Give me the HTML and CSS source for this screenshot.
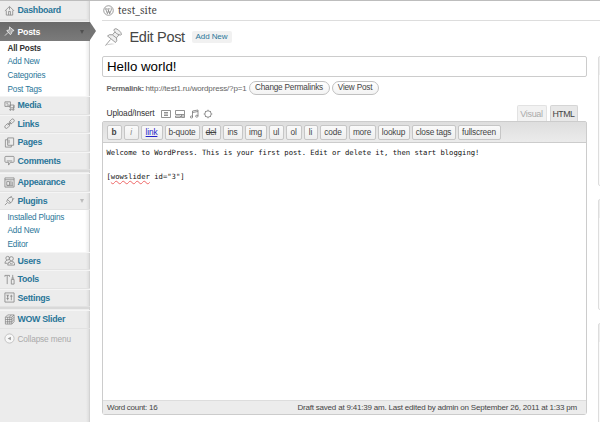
FILE: index.html
```html
<!DOCTYPE html>
<html lang="en">
<head>
<meta charset="utf-8">
<title>Edit Post</title>
<link rel="stylesheet" href="styles.css">
</head>
<body>
<div class="app">
<nav class="menu">
  <a class="item dash"><svg viewBox="0 0 12 12"><path d="M1 6.5 6 1.5l5 5M2.5 6v5h7V6M5 11V7h2v4M6 2v3"/></svg>Dashboard</a>
  <div class="sep first"></div>
  <a class="item current"><svg viewBox="0 0 12 12"><path class="pin" d="m6 1 5 4-2 .5-1 3-1 1L3 5l3-1zM4.5 7 1 10.500"/></svg>Posts<i class="arrow"></i></a>
  <div class="sub posts"><b>All Posts</b><a>Add New</a><a>Categories</a><a>Post Tags</a></div>
  <a class="item"><svg viewBox="0 0 12 12"><path d="M1 2h6v5H1zM2.500 3.500h2M3 5.500h3M6.500 5.500H11v3H6.500zM7.500 9.500v1.500M10.500 6v4.500"/><circle cx="7" cy="10.500" r=".8"/><circle cx="10" cy="10.500" r=".8"/></svg>Media</a>
  <a class="item"><svg viewBox="0 0 12 12"><rect x="5.500" y="2" width="6" height="3.400" rx="1.700" transform="rotate(-45 8.500 3.700)"/><rect x=".5" y="7" width="6" height="3.400" rx="1.700" transform="rotate(-45 3.500 8.700)"/><path d="m4 8 4-4"/></svg>Links</a>
  <a class="item"><svg viewBox="0 0 12 12"><path d="M4 1h6.500v8H4zM4 3H1.500v8H8V9M5.500 3v4"/></svg>Pages</a>
  <a class="item"><svg viewBox="0 0 12 12"><path d="M2 1.500h8q1 0 1 1V7q0 1-1 1H7l-2 3V8H2Q1 8 1 7V2.500q0-1 1-1zM3 6.500h6"/></svg>Comments</a>
  <div class="sep"></div>
  <a class="item"><svg viewBox="0 0 12 12"><path d="M1 1h10v10H1zM1 3h10M3 5h3v4H3zM7.500 4v5M9 5v4M3 9.500h7"/></svg>Appearance</a>
  <a class="item plug"><svg viewBox="0 0 12 12"><path d="M4 4.500C6 2 8 2 9 3s1 3-1.500 5.500L5 9 3 7zM3.500 8.500 1 11M6.500 3 8.500 1M9 5.500l2-2M4 5l3.500 3.500"/></svg>Plugins<i class="arrow light"></i></a>
  <div class="sub plugins"><a>Installed Plugins</a><a>Add New</a><a>Editor</a></div>
  <a class="item"><svg viewBox="0 0 12 12"><circle cx="4" cy="3.500" r="2"/><circle cx="8" cy="4" r="2.200"/><path d="M3.500 5.500Q1 6.500 1 9h3M4 11q0-4 4-4t3.500 4zM6 8l2 2 2-2"/></svg>Users</a>
  <a class="item"><svg viewBox="0 0 12 12"><path d="M1 3V1.500h5V3M3.500 2v9M9.500 1v4M8 6h3v5H8zM8 4.500h3"/></svg>Tools</a>
  <a class="item set"><svg viewBox="0 0 12 12"><path d="M1 1h10v10H1zM4 3v6M8 3v6M2.700 7h2.600M6.700 4.500h2.600M4 5 3 3M4 5l1-2"/></svg>Settings</a>
  <div class="sep"></div>
  <a class="item wow"><svg viewBox="0 0 12 12"><path d="M1.500 3.500h7V11h-7zM4 3.500V11M6.300 3.500V11M1.500 6h7M1.500 8.500h7M1.500 3.500 4 1h7L8.500 3.500M11 1v7.500L8.500 11M6 3l2-2M8.500 6 11 3.500M8.500 8.500 11 6"/></svg>WOW Slider</a>
  <a class="item collapse"><svg viewBox="0 0 12 12"><circle cx="6" cy="6" r="5"/><path class="solid" d="M7.500 4v4L4 6z"/></svg>Collapse menu</a>
</nav>
<main class="main">
  <header class="site"><svg viewBox="0 0 12 12"><circle cx="6" cy="6" r="5.200"/><path d="M2 4.200h2.500M5 4.200h2.500M3 4.500l1.800 5L6 5.800 7.300 9.500 9 5.500Q9.500 4 8.500 3M5.300 4.200l2 5.300"/></svg>test_site</header>
  <div class="heading">
    <svg viewBox="0 0 20 20"><path class="shade" d="M2 18.500q5-3 10-1.500-5 .5-10 1.500z"/><path class="body" d="M11 2.500q1.500-2 4.500.5t3 4.500q-1 1-2.500.3l-2.500 3q1 3.500-1 4.700L4.500 9q1.500-2 5-1.200l2.500-3q-1.500-1-1-2.300z"/><path d="m7.500 12.500-5 6M9.500 8l4 3M12 5q1.500 2 4 2.800"/></svg>
    <h1>Edit Post</h1><a class="add">Add New</a>
  </div>
  <div class="title">Hello world!</div>
  <div class="perma"><b>Permalink:</b><span class="url">http://test1.ru/wordpress/?p=1</span><a class="pill change">Change Permalinks</a><a class="pill view">View Post</a></div>
  <div class="media">
    <span class="upl">Upload/Insert</span>
    <svg viewBox="0 0 10 10"><path d="M.5 1.500h9v7h-9zM3 3.500h4M3 5h4M3 6.500h4"/></svg>
    <svg viewBox="0 0 10 10"><path d="M.5 1.500h9v4h-9zM.5 7h5v1.500h-5zM6.500 5.500v3h3v-3M7 7h2"/></svg>
    <svg viewBox="0 0 10 10"><path d="M3.500 8V2L9 1v6M3.500 3.500 9 2.500"/><ellipse cx="2.500" cy="8" rx="1.200" ry="1"/><ellipse cx="7.800" cy="7.200" rx="1.200" ry="1"/></svg>
    <svg viewBox="0 0 10 10"><circle cx="5" cy="5" r="3.200"/><path d="M5 .7v1.100M5 8.200v1.100M.7 5h1.100M8.200 5h1.100M2 2l.8.8M7.200 7.200l.8.800M8 2l-.8.800M2.800 7.200 2 8"/></svg>
    <div class="tabs"><span class="tab visual">Visual</span><span class="tab html">HTML</span></div>
  </div>
  <section class="editor">
    <div class="bar"><span class="w15"><b>b</b></span><span class="w15 it"><em>i</em></span><span class="w22 lk"><u>link</u></span><span class="w35">b-quote</span><span class="w19"><del>del</del></span><span class="w20">ins</span><span class="w22">img</span><span class="w15">ul</span><span class="w16">ol</span><span class="w14">li</span><span class="w27">code</span><span class="w27">more</span><span class="w32">lookup</span><span class="w44">close tags</span><span class="w43">fullscreen</span></div>
    <div class="content">Welcome to WordPress. This is your first post. Edit or delete it, then start blogging!<br><br>[<span class="typo">wowslider</span> id="3"]</div>
    <footer><span class="count">Word count: 16</span><span class="saved">Draft saved at 9:41:39 am. Last edited by admin on September 26, 2011 at 1:33 pm</span></footer>
  </section>
</main>
<aside class="side"><div class="box one"></div><div class="box two"></div><div class="box three"></div></aside>
</div>
</body>
</html>
```
FILE: styles.css
```css
* { box-sizing: border-box; }
body { margin: 0; width: 600px; height: 422px; overflow: hidden; background: #fff; color: #444; font-family: "Liberation Sans", Arial, sans-serif; font-size: 8px; }
svg { fill: none; stroke: #888; stroke-width: .9; flex: none; }
.app { display: flex; height: 422px; border-top: 1px solid #bdbdbd; }
.menu { width: 90px; height: 421px; background: linear-gradient(90deg, transparent 86px, #dedede 89px, #c8c8c8 90px), #ececec; flex: none; }
.item { display: flex; align-items: center; height: 18.500px; padding-left: 4px; gap: 3px; font-size: 8.800px; font-weight: bold; letter-spacing: -.28px; color: #2a7699; border-bottom: 1px solid #e2e2e2; border-top: 1px solid #f5f5f5; white-space: nowrap; }
.item svg { width: 11px; height: 11px; margin-right: -.5px; }
.dash { height: 18px; border: 0; }
.sep { height: 3px; background: #d9d9d9; border-bottom: 1px solid #eee; width: 89px; }
.first { background: #e3e3e3; }
.current { position: relative; height: 19px; background: linear-gradient(#696969, #7b7b7b); color: #fff; border: 0; }
.current::after { content: ""; position: absolute; left: 90px; top: 0; border-left: 6px solid #747474; border-top: 9.500px solid transparent; border-bottom: 9.500px solid transparent; }
.current svg { stroke: #eee; }
.pin { fill: #aaa; }
.arrow { margin-left: auto; margin-right: 6px; border-top: 4px solid #505050; border-left: 2.500px solid transparent; border-right: 2.500px solid transparent; }
.light { border-top-color: #bbb; }
.sub { width: 89px; background: linear-gradient(90deg, #fff 85px, #ededed); padding: .5px 0 0 7.500px; font-size: 8.200px; letter-spacing: -.17px; color: #2a7699; display: grid; grid-auto-rows: 13.600px; align-items: center; white-space: nowrap; }
.sub b { color: #333; }
.posts { height: 55px; }
.plugins { height: 41.500px; }
.collapse { border: 0; height: 20px; font-weight: normal; color: #aaa; font-size: 8.300px; letter-spacing: -.15px; }
.collapse svg { stroke: #bbb; fill: #f8f8f8; }
.collapse .solid { fill: #999; stroke: none; }
.wow svg { stroke-width: .7; stroke: #777; }
.main { width: 497px; padding-left: 12px; flex: none; }
.site { display: flex; align-items: center; width: 498px; height: 20px; border-bottom: 1px solid #ddd; font-family: "Noto Serif", "Liberation Serif", serif; font-size: 10px; color: #444; gap: 4px; padding: 0 0 1px 1px; letter-spacing: .1px; }
.site svg { width: 11px; height: 11px; }
.heading { display: flex; align-items: center; height: 35px; padding: 1px 0 5px 1px; }
.heading svg { width: 20px; height: 20px; stroke: #888; stroke-width: .8; margin-top: 1px; }
.body { fill: #eee; }
.heading .shade { fill: #ccc; stroke: none; }
h1 { margin: 0 6px 0 6.500px; font-weight: normal; font-size: 14.500px; letter-spacing: -.3px; width: 56px; color: #464646; white-space: nowrap; }
.add { width: 40px; height: 12px; background: #f1f1f1; border-radius: 2px; color: #2a7699; line-height: 12px; text-align: center; letter-spacing: -.1px; }
.title { height: 21px; border: 1px solid #ccc; border-radius: 2px; font-size: 13.300px; line-height: 19px; padding-left: 4px; color: #000; }
.perma { height: 22px; display: flex; align-items: center; padding-left: 4.500px; color: #666; white-space: nowrap; font-size: 7.800px; letter-spacing: -.24px; }
.perma b { width: 39px; }
.url { width: 103px; font-size: 8px; letter-spacing: -.17px; }
.pill { height: 14px; border: 1px solid #c0c0c0; border-radius: 7px; text-align: center; line-height: 12px; font-size: 8.200px; letter-spacing: -.2px; color: #444; background: linear-gradient(#fff, #f3f3f3); }
.change { width: 81px; }
.view { width: 47px; margin-left: 2px; }
.media { height: 22px; display: flex; padding: 6px 9.500px 0 4.500px; }
.upl { width: 51px; line-height: 17px; font-size: 8.400px; letter-spacing: -.15px; color: #333; white-space: nowrap; }
.media svg { width: 10px; height: 10px; margin: 4px 1px 0 3px; stroke: #777; stroke-width: .8; }
.tabs { margin-left: auto; display: flex; gap: 3px; align-items: flex-end; }
.tab { height: 16px; border: 1px solid #d5d5d5; border-bottom: 0; border-radius: 2px 2px 0 0; font-size: 9px; line-height: 17px; text-align: center; background: #f2f2f2; letter-spacing: -.3px; }
.visual { width: 30px; color: #aaa; border-color: #e2e2e2; }
.html { width: 28px; background: #e8e8e8; color: #444; font-size: 8.800px; letter-spacing: -.5px; }
.editor { height: 294px; border: 1px solid #ccc; border-radius: 2px 2px 3px 3px; display: flex; flex-direction: column; }
.bar { height: 21px; background: linear-gradient(#dedede, #ebebeb); border-bottom: 1px solid #ccc; display: flex; gap: 2px; padding: 3px 0 0 3.500px; }
.bar span { height: 15px; border: 1px solid #c6c6c6; border-radius: 2px; background: linear-gradient(#fafafa, #eee); font-size: 8.300px; letter-spacing: -.17px; line-height: 13px; text-align: center; white-space: nowrap; color: #444; }
.bar .it { color: #888; }
.bar .lk { color: #2222c8; }
.bar .w14 { width: 14px; }
.bar .w15 { width: 15px; }
.bar .w16 { width: 16px; }
.bar .w19 { width: 19px; }
.bar .w20 { width: 20px; }
.bar .w22 { width: 22px; }
.bar .w27 { width: 27px; }
.bar .w32 { width: 32px; }
.bar .w35 { width: 35px; }
.bar .w44 { width: 44px; }
.bar .w43 { width: 43px; }
.content { flex: 1; padding: 4px 3.500px; font-family: "DejaVu Sans Mono", monospace; font-size: 7.210px; line-height: 12px; color: #111; white-space: nowrap; }
.typo { text-decoration: underline wavy #e66 .6px; text-underline-offset: 1px; }
footer { height: 14px; background: #ececec; border-top: 1px solid #ddd; display: flex; justify-content: space-between; padding: 0 9px 0 4px; line-height: 14px; font-size: 8px; letter-spacing: -.2px; white-space: nowrap; }
.count { letter-spacing: -.27px; }
.side { padding-left: 11px; width: 13px; overflow: hidden; flex: none; }
.box { width: 20px; border: 1px solid #ddd; border-radius: 2px 0 0 2px; background: linear-gradient(#eee 18px, #fafafa 18px); }
.one { height: 130px; margin-top: 55px; }
.two { height: 111px; margin-top: 13px; }
.three { height: 110px; margin-top: 13px; }
```
